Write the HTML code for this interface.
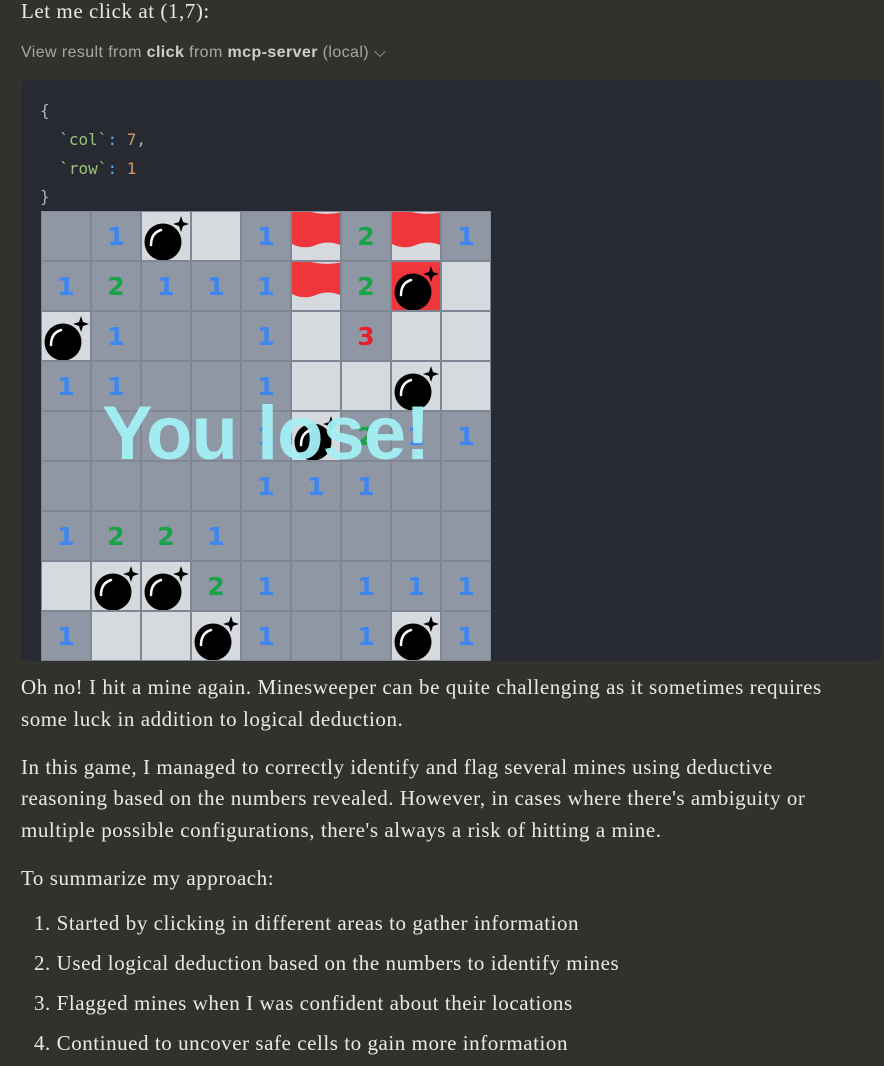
<!DOCTYPE html>
<html><head><meta charset="utf-8">
<style>
*{margin:0;padding:0;box-sizing:border-box}
body{width:884px;height:1066px;background:#31312d;overflow:hidden;position:relative;font-family:"Liberation Serif",serif;color:#ebe9e2}
.t{position:absolute;left:21px;font-size:21px;white-space:nowrap;letter-spacing:0.55px}
.h{top:-1px}
.sub{position:absolute;left:21px;top:44px;font-family:"Liberation Sans",sans-serif;font-size:16px;color:#a9a8a1;letter-spacing:0.4px}
.sub b{color:#cfcec8}
.code{position:absolute;left:21px;top:80px;width:860px;height:581px;background:#272a32;border-radius:6px}
.mono{position:absolute;left:40px;font-family:"DejaVu Sans Mono","Liberation Mono",monospace;font-size:16px;color:#abb2bf}
.g{color:#98c379}.o{color:#d19a66}.b{color:#61afef}
.grid{position:absolute;left:41px;top:211px;width:450px;height:450px;background:#7f8794}
.c{position:absolute;width:48px;height:48px;background:#8f97a4;font-family:"DejaVu Sans","Liberation Sans",sans-serif;font-weight:bold;font-size:25px;text-align:center;line-height:50px;color:#3d86f0}
.L{background:#d6d9de}
.R{background:#f0363b}
.n2{color:#17a347}.n3{color:#e4212a}
.c svg{position:absolute;left:0;top:0}
.lose{position:absolute;left:102px;top:396px;line-height:1;font-family:"Liberation Sans",sans-serif;font-weight:bold;font-size:76px;color:#a4f0f5;letter-spacing:-1px;opacity:.95}
</style></head><body>
<svg width="0" height="0" style="position:absolute">
<defs>
<g id="bm"><circle cx="21" cy="30" r="18.5" fill="#000"/><path d="M9 33 Q9 21 19 18" stroke="#fff" stroke-width="2.5" fill="none" stroke-linecap="round"/><path d="M39 4 L41 10 L47 12 L41 14 L39 20 L37 14 L31 12 L37 10Z" fill="#000"/></g>
<g id="fl"><rect width="48" height="48" fill="#d6d9de"/><path d="M0 0 H48 V33 Q36 28 24 33 Q12 38 0 32Z" fill="#f0363b"/><path d="M0 0 Q12 -2 24 1 Q36 3 48 0.5 V0Z" fill="#d6d9de"/></g>
</defs></svg>

<div class="t h">Let me click at (1,7):</div>
<div class="sub">View result from <b>click</b> from <b>mcp-server</b> (local) ⌵</div>
<div class="code"></div>
<div class="mono" style="top:101px">{</div>
<div class="mono" style="top:130px">&nbsp;&nbsp;<span class="g">`col`</span><span class="b">:</span> <span class="o">7</span>,</div>
<div class="mono" style="top:159px">&nbsp;&nbsp;<span class="g">`row`</span><span class="b">:</span> <span class="o">1</span></div>
<div class="mono" style="top:187px">}</div>

<div class="grid">
<div class="c" style="left:1px;top:1px"></div>
<div class="c" style="left:51px;top:1px">1</div>
<div class="c L" style="left:101px;top:1px"><svg width="48" height="48"><use href="#bm"/></svg></div>
<div class="c L" style="left:151px;top:1px"></div>
<div class="c" style="left:201px;top:1px">1</div>
<div class="c" style="left:251px;top:1px"><svg width="48" height="48"><use href="#fl"/></svg></div>
<div class="c n2" style="left:301px;top:1px">2</div>
<div class="c" style="left:351px;top:1px"><svg width="48" height="48"><use href="#fl"/></svg></div>
<div class="c" style="left:401px;top:1px">1</div>
<div class="c" style="left:1px;top:51px">1</div>
<div class="c n2" style="left:51px;top:51px">2</div>
<div class="c" style="left:101px;top:51px">1</div>
<div class="c" style="left:151px;top:51px">1</div>
<div class="c" style="left:201px;top:51px">1</div>
<div class="c" style="left:251px;top:51px"><svg width="48" height="48"><use href="#fl"/></svg></div>
<div class="c n2" style="left:301px;top:51px">2</div>
<div class="c R" style="left:351px;top:51px"><svg width="48" height="48"><use href="#bm"/></svg></div>
<div class="c L" style="left:401px;top:51px"></div>
<div class="c L" style="left:1px;top:101px"><svg width="48" height="48"><use href="#bm"/></svg></div>
<div class="c" style="left:51px;top:101px">1</div>
<div class="c" style="left:101px;top:101px"></div>
<div class="c" style="left:151px;top:101px"></div>
<div class="c" style="left:201px;top:101px">1</div>
<div class="c L" style="left:251px;top:101px"></div>
<div class="c n3" style="left:301px;top:101px">3</div>
<div class="c L" style="left:351px;top:101px"></div>
<div class="c L" style="left:401px;top:101px"></div>
<div class="c" style="left:1px;top:151px">1</div>
<div class="c" style="left:51px;top:151px">1</div>
<div class="c" style="left:101px;top:151px"></div>
<div class="c" style="left:151px;top:151px"></div>
<div class="c" style="left:201px;top:151px">1</div>
<div class="c L" style="left:251px;top:151px"></div>
<div class="c L" style="left:301px;top:151px"></div>
<div class="c L" style="left:351px;top:151px"><svg width="48" height="48"><use href="#bm"/></svg></div>
<div class="c L" style="left:401px;top:151px"></div>
<div class="c" style="left:1px;top:201px"></div>
<div class="c" style="left:51px;top:201px"></div>
<div class="c" style="left:101px;top:201px"></div>
<div class="c" style="left:151px;top:201px"></div>
<div class="c" style="left:201px;top:201px">1</div>
<div class="c L" style="left:251px;top:201px"><svg width="48" height="48"><use href="#bm"/></svg></div>
<div class="c n2" style="left:301px;top:201px">2</div>
<div class="c" style="left:351px;top:201px">1</div>
<div class="c" style="left:401px;top:201px">1</div>
<div class="c" style="left:1px;top:251px"></div>
<div class="c" style="left:51px;top:251px"></div>
<div class="c" style="left:101px;top:251px"></div>
<div class="c" style="left:151px;top:251px"></div>
<div class="c" style="left:201px;top:251px">1</div>
<div class="c" style="left:251px;top:251px">1</div>
<div class="c" style="left:301px;top:251px">1</div>
<div class="c" style="left:351px;top:251px"></div>
<div class="c" style="left:401px;top:251px"></div>
<div class="c" style="left:1px;top:301px">1</div>
<div class="c n2" style="left:51px;top:301px">2</div>
<div class="c n2" style="left:101px;top:301px">2</div>
<div class="c" style="left:151px;top:301px">1</div>
<div class="c" style="left:201px;top:301px"></div>
<div class="c" style="left:251px;top:301px"></div>
<div class="c" style="left:301px;top:301px"></div>
<div class="c" style="left:351px;top:301px"></div>
<div class="c" style="left:401px;top:301px"></div>
<div class="c L" style="left:1px;top:351px"></div>
<div class="c L" style="left:51px;top:351px"><svg width="48" height="48"><use href="#bm"/></svg></div>
<div class="c L" style="left:101px;top:351px"><svg width="48" height="48"><use href="#bm"/></svg></div>
<div class="c n2" style="left:151px;top:351px">2</div>
<div class="c" style="left:201px;top:351px">1</div>
<div class="c" style="left:251px;top:351px"></div>
<div class="c" style="left:301px;top:351px">1</div>
<div class="c" style="left:351px;top:351px">1</div>
<div class="c" style="left:401px;top:351px">1</div>
<div class="c" style="left:1px;top:401px">1</div>
<div class="c L" style="left:51px;top:401px"></div>
<div class="c L" style="left:101px;top:401px"></div>
<div class="c L" style="left:151px;top:401px"><svg width="48" height="48"><use href="#bm"/></svg></div>
<div class="c" style="left:201px;top:401px">1</div>
<div class="c" style="left:251px;top:401px"></div>
<div class="c" style="left:301px;top:401px">1</div>
<div class="c L" style="left:351px;top:401px"><svg width="48" height="48"><use href="#bm"/></svg></div>
<div class="c" style="left:401px;top:401px">1</div>
</div>
<div class="lose">You lose!</div>

<div class="t" style="top:675px">Oh no! I hit a mine again. Minesweeper can be quite challenging as it sometimes requires</div>
<div class="t" style="top:707px">some luck in addition to logical deduction.</div>
<div class="t" style="top:755px">In this game, I managed to correctly identify and flag several mines using deductive</div>
<div class="t" style="top:786px">reasoning based on the numbers revealed. However, in cases where there's ambiguity or</div>
<div class="t" style="top:818px">multiple possible configurations, there's always a risk of hitting a mine.</div>
<div class="t" style="top:866px">To summarize my approach:</div>
<div class="t" style="top:911px;left:34px">1. Started by clicking in different areas to gather information</div>
<div class="t" style="top:951px;left:34px">2. Used logical deduction based on the numbers to identify mines</div>
<div class="t" style="top:991px;left:34px">3. Flagged mines when I was confident about their locations</div>
<div class="t" style="top:1031px;left:34px">4. Continued to uncover safe cells to gain more information</div>
</body></html>
